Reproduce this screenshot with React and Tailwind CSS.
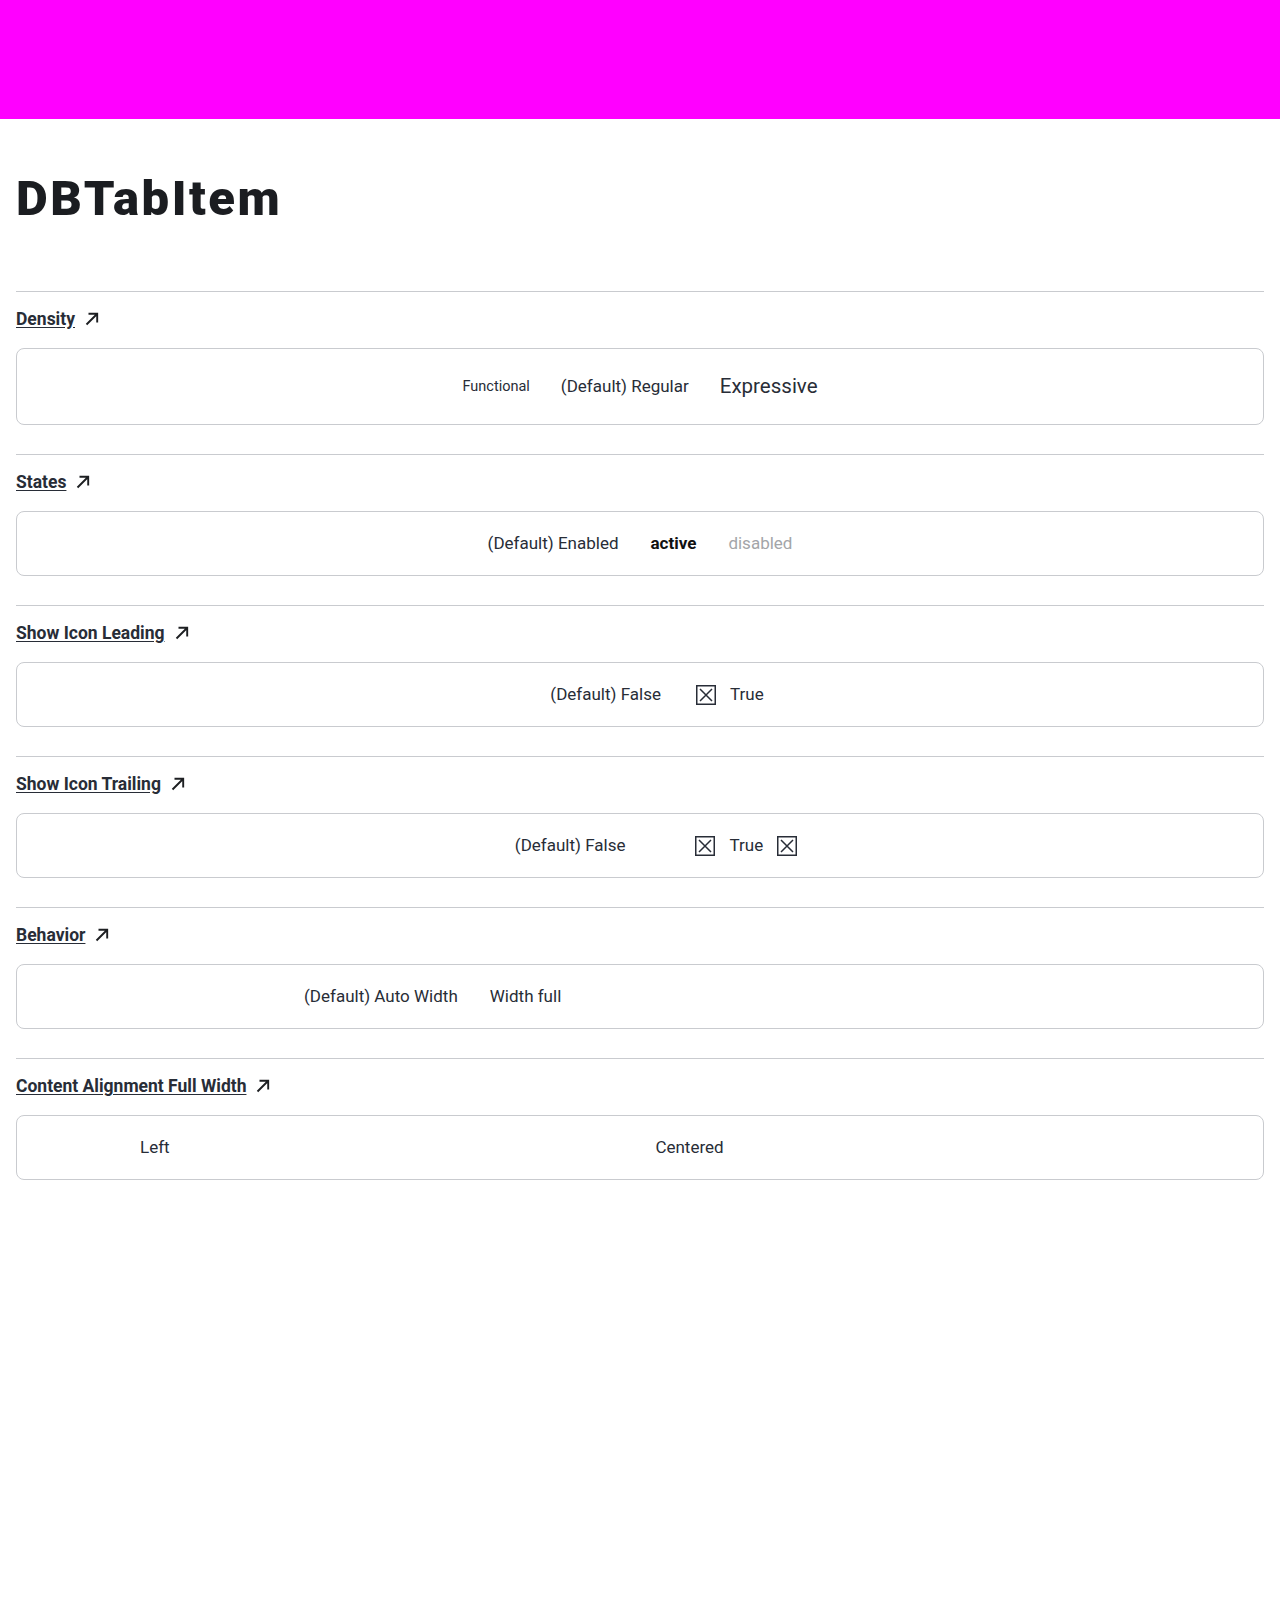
import React from 'react';

// =====================================================
// SMALL PIECES
// =====================================================

const CrossBox = () => (
  <svg width="20" height="20" viewBox="0 0 20 20" fill="none" className="shrink-0">
    <rect x="0.75" y="0.75" width="18.5" height="18.5" stroke="#282d37" strokeWidth="1.5" />
    <path d="M4 4 L16 16 M16 4 L4 16" stroke="#282d37" strokeWidth="1.5" />
  </svg>
);

const Arrow = () => (
  <svg width="14" height="14" viewBox="0 0 14 14" fill="none" className="shrink-0">
    <path d="M1.5 12.5 L12 2 M3.5 1.8 H12.2 V10.5" stroke="#1d1f22" strokeWidth="1.9" />
  </svg>
);

const Section = ({ title, boxClass = 'h-[65px]', children }) => (
  <section className="border-t border-[#c9cbcf] pt-[15px] mb-[29px]">
    <a href="#" className="flex items-center gap-[10px] h-6 text-[17.5px] font-bold text-[#282d37]">
      <span className="underline underline-offset-2">{title}</span>
      <Arrow />
    </a>
    <div className={`mt-[17px] border border-[#c9cbcf] rounded-lg flex items-center ${boxClass}`}>
      {children}
    </div>
  </section>
);

// =====================================================
// PAGE
// =====================================================

export default function App() {
  return (
    <div className="min-h-[1600px] bg-white text-[#282d37]" style={{ fontFamily: 'Roboto, "Open Sans", sans-serif' }}>

      <div className="h-[119px] bg-[#ff00ff]" />

      <main className="px-4">

        <h1 className="mt-[55px] mb-[68px] text-[49px] leading-none font-black text-[#1b1d21] tracking-[2.5px]">
          DBTabItem
        </h1>

        {/* DENSITY */}
        <Section title="Density" boxClass="h-[77px] justify-center gap-[31px]">
          <span className="text-[14.5px]">Functional</span>
          <span className="text-[17px]">(Default) Regular</span>
          <span className="text-[20.5px]">Expressive</span>
        </Section>

        {/* STATES */}
        <Section title="States" boxClass="h-[65px] justify-center gap-8">
          <span className="text-[17px]">(Default) Enabled</span>
          <span className="text-[17px] font-bold text-[#111]">active</span>
          <span className="text-[17px] text-[#a3a5a8]">disabled</span>
        </Section>

        {/* ICON LEADING */}
        <Section title="Show Icon Leading" boxClass="h-[65px] justify-center pl-[34px]">
          <span className="text-[17px] mr-[35px]">(Default) False</span>
          <span className="flex items-center gap-[14px] text-[17px]">
            <CrossBox />
            True
          </span>
        </Section>

        {/* ICON TRAILING */}
        <Section title="Show Icon Trailing" boxClass="h-[65px] justify-center pl-[32px]">
          <span className="text-[17px] mr-[70px]">(Default) False</span>
          <span className="flex items-center gap-[14px] text-[17px]">
            <CrossBox />
            True
            <CrossBox />
          </span>
        </Section>

        {/* BEHAVIOR */}
        <Section title="Behavior" boxClass="h-[65px] pl-[287px] gap-8">
          <span className="text-[17px]">(Default) Auto Width</span>
          <span className="text-[17px]">Width full</span>
        </Section>

        {/* CONTENT ALIGNMENT */}
        <Section title="Content Alignment Full Width" boxClass="h-[65px] pl-[107px]">
          <span className="w-[377px] pl-4 text-[17px]">Left</span>
          <span className="w-[377px] text-center text-[17px]">Centered</span>
        </Section>

      </main>
    </div>
  );
}
